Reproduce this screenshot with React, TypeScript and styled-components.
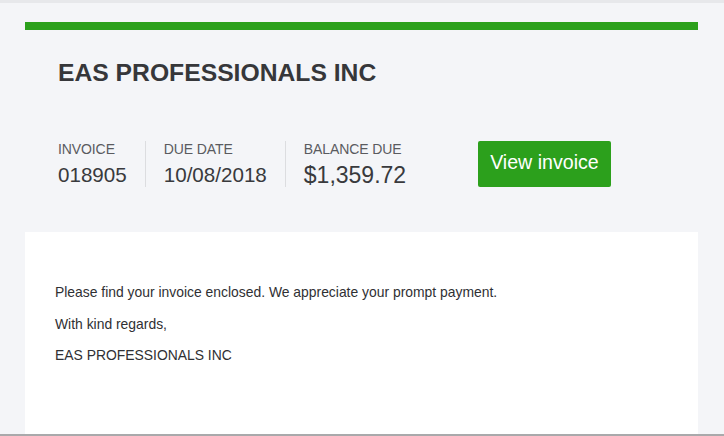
import React from "react";
import styled, { createGlobalStyle } from "styled-components";

const GlobalStyle = createGlobalStyle`
  html, body {
    margin: 0;
    padding: 0;
    background: #f4f5f8;
  }
  body {
    font-family: "Liberation Sans", Arial, sans-serif;
    -webkit-font-smoothing: antialiased;
  }
  * { box-sizing: border-box; }
`;

const Page = styled.div`
  height: 436px;
  display: flex;
  flex-direction: column;
  padding: 0 26px 0 25px;
  background: #f4f5f8;
  border-top: 3px solid #e7e8eb;
  border-bottom: 2px solid #a9a9ab;
  overflow: hidden;
`;

const AccentBar = styled.div`
  height: 8px;
  margin-top: 19px;
  background: #2ca01c;
`;

const Header = styled.header`
  padding: 29px 0 0 33px;
`;

const Title = styled.h1`
  margin: 0;
  font-size: 24.7px;
  line-height: 28px;
  font-weight: 700;
  color: #36373a;
`;

const SummaryRow = styled.div`
  display: flex;
  align-items: stretch;
  margin-top: 54px;
`;

const Field = styled.div<{ $first?: boolean }>`
  display: flex;
  flex-direction: column;
  gap: 6px;
  padding: 0 18px;
  ${(p) => (p.$first ? "padding-left: 0;" : "border-left: 1px solid #dcdde0;")}
`;

const Label = styled.span`
  font-size: 14px;
  line-height: 16px;
  color: #5a5b5f;
  letter-spacing: -0.1px;
`;

const Value = styled.span<{ $large?: boolean }>`
  font-size: ${(p) => (p.$large ? "23px" : "20.6px")};
  line-height: 24px;
  color: #393a3d;
`;

const ViewButton = styled.button`
  margin-left: 54px;
  height: 46px;
  padding: 0 12px 5px;
  border: none;
  border-radius: 2px;
  background: #2ca01c;
  color: #ffffff;
  font-family: "Liberation Sans", Arial, sans-serif;
  font-size: 19.6px;
  line-height: 22px;
  cursor: pointer;
`;

const MessageCard = styled.section`
  flex: 1;
  margin-top: 45px;
  background: #ffffff;
  padding: 50px 30px 0 30px;
`;

const Paragraph = styled.p`
  margin: 0 0 10.5px 0;
  font-size: 13.9px;
  line-height: 21px;
  color: #2f3033;
`;

export default function App() {
  return (
    <>
      <GlobalStyle />
      <Page>
        <AccentBar />
        <Header>
          <Title>EAS PROFESSIONALS INC</Title>
          <SummaryRow>
            <Field $first>
              <Label>INVOICE</Label>
              <Value>018905</Value>
            </Field>
            <Field>
              <Label>DUE DATE</Label>
              <Value>10/08/2018</Value>
            </Field>
            <Field>
              <Label>BALANCE DUE</Label>
              <Value $large>$1,359.72</Value>
            </Field>
            <ViewButton>View invoice</ViewButton>
          </SummaryRow>
        </Header>
        <MessageCard>
          <Paragraph>Please find your invoice enclosed. We appreciate your prompt payment.</Paragraph>
          <Paragraph>With kind regards,</Paragraph>
          <Paragraph>EAS PROFESSIONALS INC</Paragraph>
        </MessageCard>
      </Page>
    </>
  );
}
